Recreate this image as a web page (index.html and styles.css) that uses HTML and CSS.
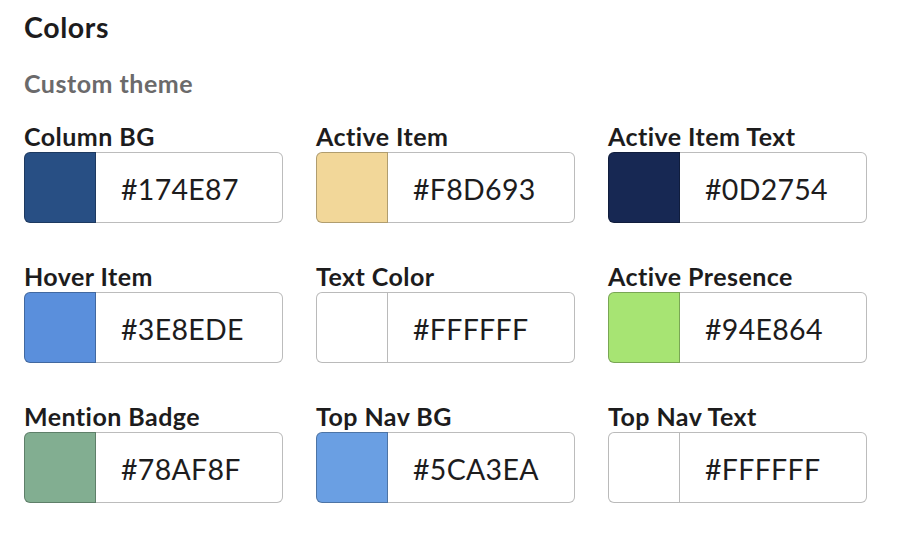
FILE: index.html
```html
<!DOCTYPE html>
<html lang="en">
<head>
<meta charset="utf-8">
<title>Colors</title>
<link rel="stylesheet" href="styles.css">
</head>
<body>
<main class="panel">
  <h1 class="title">Colors</h1>
  <h2 class="subtitle">Custom theme</h2>
  <div class="grid">
    <div class="item">
      <div class="label">Column BG</div>
      <div class="field"><span class="swatch" style="background:#284f84"></span><span class="hex">#174E87</span></div>
    </div>
    <div class="item">
      <div class="label">Active Item</div>
      <div class="field"><span class="swatch" style="background:#f2d799"></span><span class="hex">#F8D693</span></div>
    </div>
    <div class="item">
      <div class="label">Active Item Text</div>
      <div class="field"><span class="swatch" style="background:#172853"></span><span class="hex">#0D2754</span></div>
    </div>
    <div class="item">
      <div class="label">Hover Item</div>
      <div class="field"><span class="swatch" style="background:#5a8fdc"></span><span class="hex">#3E8EDE</span></div>
    </div>
    <div class="item">
      <div class="label">Text Color</div>
      <div class="field"><span class="swatch" style="background:#ffffff"></span><span class="hex">#FFFFFF</span></div>
    </div>
    <div class="item">
      <div class="label">Active Presence</div>
      <div class="field"><span class="swatch" style="background:#a7e473"></span><span class="hex">#94E864</span></div>
    </div>
    <div class="item">
      <div class="label">Mention Badge</div>
      <div class="field"><span class="swatch" style="background:#82ae91"></span><span class="hex">#78AF8F</span></div>
    </div>
    <div class="item">
      <div class="label">Top Nav BG</div>
      <div class="field"><span class="swatch" style="background:#6a9fe3"></span><span class="hex">#5CA3EA</span></div>
    </div>
    <div class="item">
      <div class="label">Top Nav Text</div>
      <div class="field"><span class="swatch" style="background:#ffffff"></span><span class="hex">#FFFFFF</span></div>
    </div>
  </div>
</main>
</body>
</html>
```
FILE: styles.css
```css
html, body {
  margin: 0;
  padding: 0;
  background: #ffffff;
}

body {
  font-family: Lato, "Liberation Sans", sans-serif;
  color: #1d1c1d;
}

.panel {
  padding: 9px 24px 0 24px;
}

.title {
  margin: 0;
  font-size: 28.5px;
  font-weight: 700;
  line-height: 36px;
  letter-spacing: 0.6px;
  color: #1d1c1d;
}

.subtitle {
  margin: 23px 0 0 0;
  font-size: 25px;
  font-weight: 700;
  line-height: 30px;
  letter-spacing: 0.5px;
  color: #6b6a6b;
}

.grid {
  margin-top: 23px;
  display: grid;
  grid-template-columns: repeat(3, 259px);
  column-gap: 33px;
  row-gap: 38px;
}

.label {
  font-size: 25px;
  font-weight: 700;
  line-height: 31px;
  letter-spacing: 0.45px;
  color: #1d1c1d;
}

.field {
  display: flex;
  height: 71px;
}

.swatch {
  width: 72px;
  flex: 0 0 72px;
  box-sizing: border-box;
  border: 1px solid rgba(0, 0, 0, 0.27);
  border-radius: 6px 0 0 6px;
}

.hex {
  flex: 1;
  box-sizing: border-box;
  display: flex;
  align-items: center;
  padding-left: 25px;
  padding-top: 3px;
  border: 1.5px solid #bcbcbc;
  border-left: none;
  border-radius: 0 6px 6px 0;
  font-size: 28.5px;
  font-weight: 400;
  color: #1d1c1d;
  letter-spacing: 0.3px;
}
```
